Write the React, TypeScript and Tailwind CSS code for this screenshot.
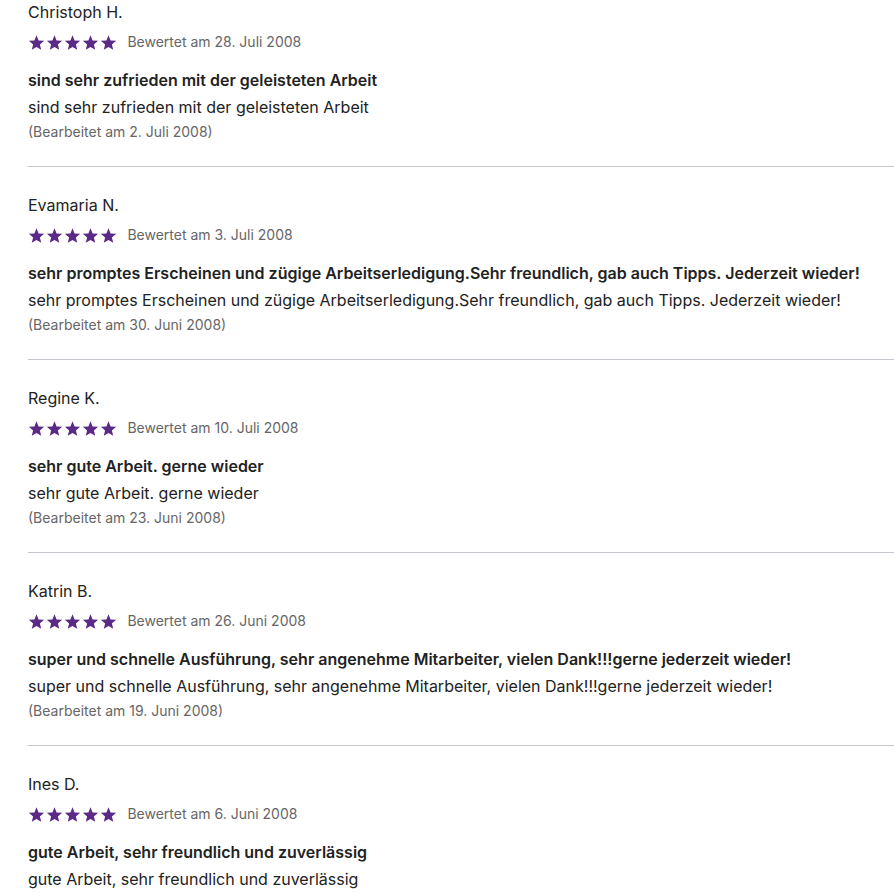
const reviews = [
  {
    name: "Christoph H.",
    date: "28. Juli 2008",
    title: "sind sehr zufrieden mit der geleisteten Arbeit",
    text: "sind sehr zufrieden mit der geleisteten Arbeit",
    edited: "2. Juli 2008",
  },
  {
    name: "Evamaria N.",
    date: "3. Juli 2008",
    title:
      "sehr promptes Erscheinen und zügige Arbeitserledigung.Sehr freundlich, gab auch Tipps. Jederzeit wieder!",
    text: "sehr promptes Erscheinen und zügige Arbeitserledigung.Sehr freundlich, gab auch Tipps. Jederzeit wieder!",
    edited: "30. Juni 2008",
  },
  {
    name: "Regine K.",
    date: "10. Juli 2008",
    title: "sehr gute Arbeit. gerne wieder",
    text: "sehr gute Arbeit. gerne wieder",
    edited: "23. Juni 2008",
  },
  {
    name: "Katrin B.",
    date: "26. Juni 2008",
    title:
      "super und schnelle Ausführung, sehr angenehme Mitarbeiter, vielen Dank!!!gerne jederzeit wieder!",
    text: "super und schnelle Ausführung, sehr angenehme Mitarbeiter, vielen Dank!!!gerne jederzeit wieder!",
    edited: "19. Juni 2008",
  },
  {
    name: "Ines D.",
    date: "6. Juni 2008",
    title: "gute Arbeit, sehr freundlich und zuverlässig",
    text: "gute Arbeit, sehr freundlich und zuverlässig",
    edited: "1. Juni 2008",
  },
];

function Star() {
  return (
    <svg viewBox="0 0 24 24" className="w-[17px] h-[17px] shrink-0" fill="#5b2a86">
      <path d="M12 1.8l2.95 7.3 7.85.55-6.03 5.05 1.9 7.65L12 18.2l-6.67 4.15 1.9-7.65L1.2 9.65l7.85-.55z" />
    </svg>
  );
}

export default function App() {
  return (
    <div
      className="w-[894px] h-[894px] overflow-hidden bg-white pl-[28px] text-[#222222]"
      style={{ fontFamily: "Inter, 'Noto Sans', sans-serif" }}
    >
      {reviews.map((r, idx) => (
        <div
          key={idx}
          className={`${idx > 0 ? "pt-[26px]" : ""} pb-[24.5px] border-b border-[#c6c4cc]`}
        >
          <p className="text-base leading-6 whitespace-nowrap">{r.name}</p>
          <div className="flex items-center mt-[6px] h-6">
            <div className="flex gap-[1.1px]">
              <Star />
              <Star />
              <Star />
              <Star />
              <Star />
            </div>
            <span className="ml-[10px] text-sm text-[#666666] whitespace-nowrap">
              Bewertet am {r.date}
            </span>
          </div>
          <p className="mt-[14px] text-base leading-6 font-semibold whitespace-nowrap">
            {r.title}
          </p>
          <p className="mt-[3px] text-base leading-6 whitespace-nowrap">{r.text}</p>
          <p className="mt-[2.5px] text-sm leading-5 text-[#666666] whitespace-nowrap">
            (Bearbeitet am {r.edited})
          </p>
        </div>
      ))}
    </div>
  );
}
